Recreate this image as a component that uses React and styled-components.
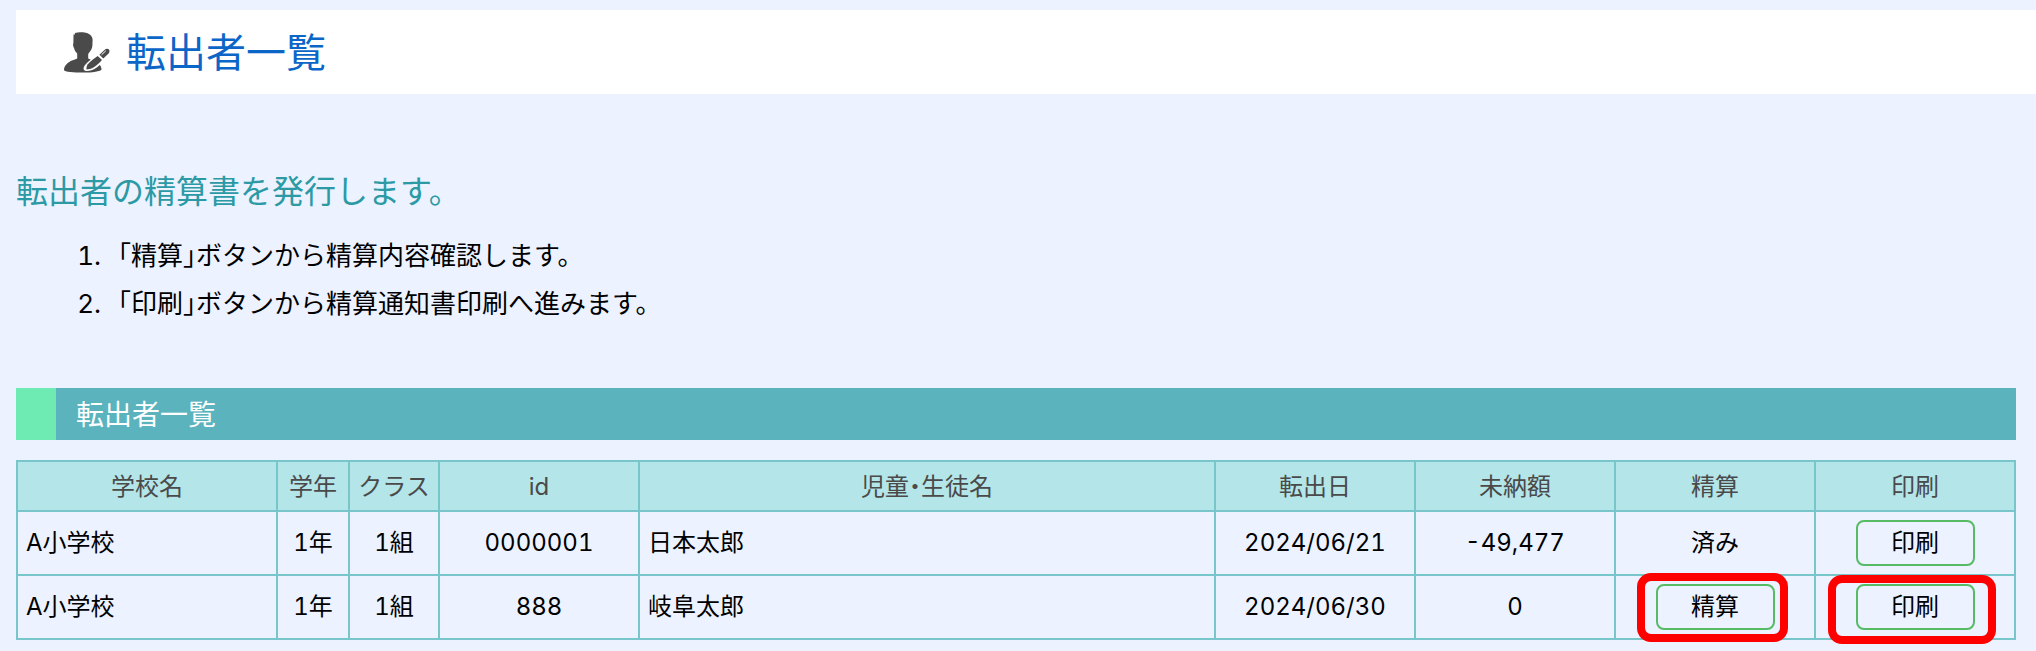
import React from 'react'
import styled, { createGlobalStyle } from 'styled-components'

const GlobalStyle = createGlobalStyle`
    * {
        box-sizing: border-box;
    }
    body {
        margin: 0;
        background: #ecf2ff;
        color: #000;
        font-family: Inter, 'Noto Sans CJK JP', sans-serif;
        font-size: 24px;
        font-feature-settings: 'halt', 'tnum';
    }
`

const Page = styled.main`
    padding: 10px 0 10px 16px;
`

const Header = styled.header`
    display: flex;
    align-items: center;
    gap: 16px;
    height: 84px;
    padding-left: 48px;
    background: #fff;
`

const Title = styled.h1`
    margin: 0;
    padding-top: 2px;
    color: #0b66c8;
    font-size: 40px;
    font-weight: 400;
    line-height: 48px;
`

const Content = styled.div`
    padding-right: 20px;
`

const Lead = styled.h2`
    margin: 74px 0 16px;
    color: #2b9aa5;
    font-size: 32px;
    font-weight: 400;
    line-height: 48px;
`

const Steps = styled.ol`
    margin: 0;
    padding-left: 92px;
    font-size: 26px;
    line-height: 48px;

    li {
        padding-left: 10px;
    }
`

const SectionTitle = styled.h3`
    margin: 60px 0 20px;
    padding: 2px 0 0 20px;
    border-left: 40px solid #6eebb3;
    background: #5bb3bd;
    color: #fff;
    font-size: 28px;
    font-weight: 400;
    line-height: 50px;
`

const Table = styled.table`
    width: 100%;
    table-layout: fixed;
    border-collapse: collapse;
    line-height: 32px;
`

const Col = styled.col`
    width: ${({ $w }) => ($w ? `${$w}px` : 'auto')};
`

const Th = styled.th`
    height: 50px;
    padding: 2px 0 0;
    border: 2px solid #78c6cb;
    background: #b4e5e8;
    color: #4a4a4a;
    font-weight: 400;
`

const Td = styled.td`
    height: 64px;
    padding: 0 8px;
    border: 2px solid #78c6cb;
    text-align: ${({ $left }) => ($left ? 'left' : 'center')};
`

const ButtonArea = styled.div`
    position: relative;
    width: 119px;
    margin: 0 auto;
`

const Button = styled.button`
    display: block;
    width: 100%;
    height: 46px;
    padding: 0;
    border: 2px solid #57bb63;
    border-radius: 8px;
    background: transparent;
    color: inherit;
    font: inherit;
    font-feature-settings: inherit;
    cursor: pointer;
`

const Marker = styled.span`
    position: absolute;
    inset: ${({ $inset }) => $inset};
    border: 8px solid #f00;
    border-radius: 14px;
    pointer-events: none;
`

const columns = [
    { name: '学校名', w: 260 },
    { name: '学年', w: 72 },
    { name: 'クラス', w: 90 },
    { name: 'id', w: 200 },
    { name: '児童・生徒名' },
    { name: '転出日', w: 200 },
    { name: '未納額', w: 200 },
    { name: '精算', w: 200 },
    { name: '印刷', w: 200 },
]

const students = [
    { id: '0000001', school: 'A小学校', grade: '1年', room: '1組', name: '日本太郎', date: '2024/06/21', unpaid: '-49,477', settled: true },
    { id: '888', school: 'A小学校', grade: '1年', room: '1組', name: '岐阜太郎', date: '2024/06/30', unpaid: '0', settled: false },
]

const UserEditIcon = () => (
    <svg width="46" height="41" viewBox="0 0 46 41" aria-hidden="true">
        <path
            fill="#4a4a4a"
            d="M9.5 2.5 L11 2.5 L10.8 1 C14 0 20 -0.3 23 1 C25.5 2 28.5 4 28.6 7.5 L28.4 13.5 C28.3 17 26 19.5 24.2 22 L24.2 26.5 C27 28.5 32 29.5 35 32 C36.5 33.5 37.5 35.5 37.5 37.5 C37 39.5 28 40.6 19 40.6 C10 40.6 0.5 40 0 38 C0 34 3.5 30.5 8 28.5 C10 27.7 12 27.5 13.2 26.5 L13.2 21.5 C11.5 20 10.5 18 10 16 C9 14.5 8.8 12 9.4 11 Z"
        />
        <path
            fill="#fff"
            d="M34 21.5 L27 27.5 C22.5 31 19.5 34 19.6 37 C20 39.5 24 39.5 27.5 38.3 C31.5 37 35.5 33.5 39 29.5 Z"
        />
        <path fill="#4a4a4a" d="M35.4 22.7 L40.5 18 C42 16.5 44 16.5 45 17.6 C45.8 18.7 45.6 20.3 44.6 21.4 L39.3 26.5 Z" />
        <path fill="#4a4a4a" d="M33.7 24 L38 28 C35 31.5 31.5 34.5 28 36.3 C26.5 37 24.5 37.5 22.5 37.5 C22.3 35.5 22.6 34 23.8 32.3 C26 29.5 30 26.5 33.7 24 Z" />
        <path d="M37.5 22.8 L41.8 18.8" stroke="#fff" strokeWidth="1" />
    </svg>
)

const App = () => {
    const rows = students.map((s) => {
        return (
            <tr key={s.id}>
                <Td $left>{s.school}</Td>
                <Td>{s.grade}</Td>
                <Td>{s.room}</Td>
                <Td>{s.id}</Td>
                <Td $left>{s.name}</Td>
                <Td>{s.date}</Td>
                <Td>{s.unpaid}</Td>
                <Td>
                    {s.settled ? '済み' : (
                        <ButtonArea>
                            <Button type="button">精算</Button>
                            <Marker $inset="-11px -13px -12px -19px" />
                        </ButtonArea>
                    )}
                </Td>
                <Td>
                    <ButtonArea>
                        <Button type="button">印刷</Button>
                        {!s.settled && <Marker $inset="-9px -21px -14px -28px" />}
                    </ButtonArea>
                </Td>
            </tr>
        )
    })

    return (
        <Page lang="ja">
            <GlobalStyle />
            <Header>
                <UserEditIcon />
                <Title>転出者一覧</Title>
            </Header>
            <Content>
                <Lead>転出者の精算書を発行します。</Lead>
                <Steps>
                    <li>「精算」ボタンから精算内容確認します。</li>
                    <li>「印刷」ボタンから精算通知書印刷へ進みます。</li>
                </Steps>
                <SectionTitle>転出者一覧</SectionTitle>
                <Table>
                    <colgroup>
                        {columns.map((c) => <Col key={c.name} $w={c.w} />)}
                    </colgroup>
                    <thead>
                        <tr>
                            {columns.map((c) => <Th key={c.name} scope="col">{c.name}</Th>)}
                        </tr>
                    </thead>
                    <tbody>{rows}</tbody>
                </Table>
            </Content>
        </Page>
    )
}

export default App
